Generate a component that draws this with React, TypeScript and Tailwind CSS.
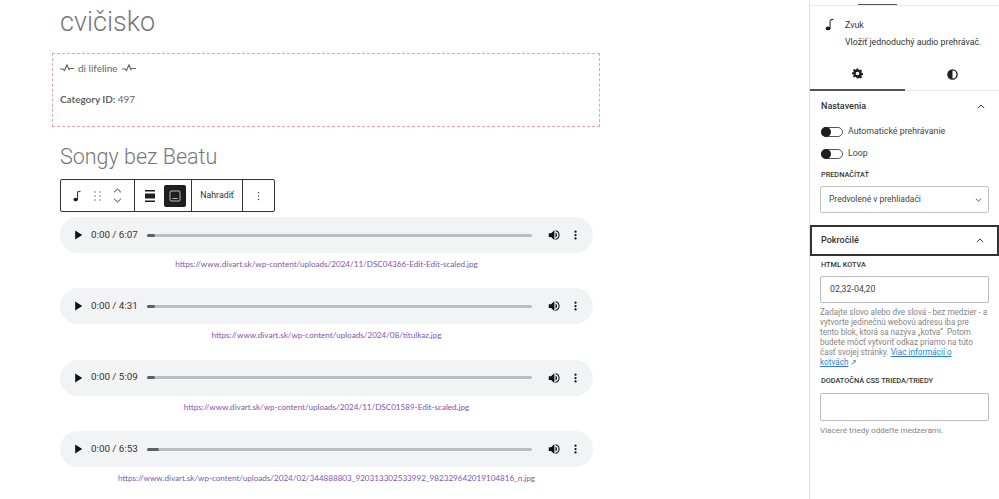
import React from "react";

const Note = ({ c = "" }: { c?: string }) => (
  <svg viewBox="0 0 12 16" className={c} fill="#1e1e1e">
    <ellipse cx="3.6" cy="12.8" rx="3" ry="2.4" />
    <path d="M5.500 12.800V4.200C5.500 2 6.800 1 10 1v1.400C8 2.400 6.700 2.900 6.700 4.400v8.400z" />
  </svg>
);

const Pulse = () => (
  <svg viewBox="0 0 14 8" className="w-[14px] h-[8px]" fill="none" stroke="#666" strokeWidth="1.2">
    <path d="M0 5h3l1.5 1.5L7 1l2 4.5 1-1h4" />
  </svg>
);

const Player = ({ time, progress, url }: { time: string; progress: number; url: string }) => (
  <div className="h-[71.4px] shrink-0">
    <div className="h-[36px] w-[533px] ml-[8px] rounded-[18px] bg-[#f1f3f4] flex items-center pl-[14px] pr-[12px]">
      <svg viewBox="0 0 10 12" className="w-[9px] h-[10px] shrink-0" fill="#111"><path d="M1 0.5v11l8.5-5.5z" /></svg>
      <span className="ml-[8px] w-[50px] shrink-0 text-[9.800px] text-[#333] font-['Roboto',sans-serif] whitespace-nowrap">{time}</span>
      <div className="ml-[6px] w-[385px] h-[3px] rounded bg-[#bdbdbd] shrink-0">
        <div className="h-[3px] rounded bg-[#5f5f5f]" style={{ width: progress }} />
      </div>
      <svg viewBox="0 0 16 16" className="ml-[16px] w-[12px] h-[12px] shrink-0" fill="#111">
        <path d="M1 5.5v5h3l4.5 4V1.500L4 5.500z" />
        <path d="M10 4.500a4 4 0 0 1 0 7zM10 1.500v1.600a5 5 0 0 1 0 9.800v1.600a6.600 6.600 0 0 0 0-13z" />
      </svg>
      <svg viewBox="0 0 4 12" className="ml-[14px] w-[3px] h-[10px] shrink-0" fill="#111">
        <circle cx="2" cy="1.500" r="1.500" /><circle cx="2" cy="6" r="1.500" /><circle cx="2" cy="10.500" r="1.500" />
      </svg>
    </div>
    <div className="w-[533px] ml-[8px] mt-[6px] text-center text-[8.100px] leading-[11px] text-[#7f54b3] font-['Lato',sans-serif] whitespace-nowrap">{url}</div>
  </div>
);

const Sep = () => <div className="w-px self-stretch bg-[#333]" />;

const Chevron = ({ c = "" }: { c?: string }) => (
  <svg viewBox="0 0 10 6" className={c} fill="none" stroke="#1e1e1e" strokeWidth="1.100"><path d="M1 5l4-3.800L9 5" /></svg>
);

const Toggle = ({ label }: { label: string }) => (
  <div className="flex items-center h-[12px]">
    <div className="relative ml-[1px] w-[22px] h-[10px] rounded-full border border-[#555] bg-white">
      <div className="absolute left-[-1px] top-[-1px] w-[10px] h-[10px] rounded-full bg-[#1e1e1e]" />
    </div>
    <span className="ml-[5px] text-[8.800px] text-[#444]">{label}</span>
  </div>
);

export default function App() {
  return (
    <div className="w-[999px] h-[499px] overflow-hidden flex bg-white">
      <main className="w-[809px] shrink-0 pl-[52px]">
        <h1 className="ml-[8px] pt-[4px] h-[40px] text-[27px] leading-[36px] font-light text-[#777] font-['Roboto',sans-serif]">cvičisko</h1>
        <section className="mt-[13px] w-[548px] h-[74px] border border-dashed border-[#f2a0a8] pl-[7px] pt-[8px] text-[#666]">
          <div className="flex items-center gap-[4px] h-[12px] text-[10px] leading-[12px] font-['Lato',sans-serif]">
            <Pulse /><span>di lifeline</span><Pulse />
          </div>
          <div className="mt-[19px] text-[10px] leading-[12px] tracking-[-0.05px] font-['Lato',sans-serif]"><b>Category ID:</b> 497</div>
        </section>
        <h2 className="ml-[8px] mt-[16px] h-[28px] text-[21.500px] leading-[28px] font-light text-[#777] font-['Roboto',sans-serif]">Songy bez Beatu</h2>
        <div className="ml-[8px] mt-[8px] w-[215px] h-[33px] border border-[#333] rounded-[2px] bg-white flex items-center font-['Roboto',sans-serif]">
          <div className="w-[73px] flex items-center pl-[12px]">
            <Note c="w-[9px] h-[12px]" />
            <svg viewBox="0 0 8 10" className="ml-[12px] w-[8px] h-[10px]" fill="#555">
              <circle cx="1" cy="1" r=".7" /><circle cx="6" cy="1" r=".7" /><circle cx="1" cy="5" r=".7" /><circle cx="6" cy="5" r=".7" /><circle cx="1" cy="9" r=".7" /><circle cx="6" cy="9" r=".7" />
            </svg>
            <div className="ml-[11px] flex flex-col gap-[5px]">
              <Chevron c="w-[9px] h-[5px]" />
              <Chevron c="w-[9px] h-[5px] rotate-180" />
            </div>
          </div>
          <Sep />
          <div className="w-[56px] flex items-center pl-[10px]">
            <svg viewBox="0 0 10 12" className="w-[10px] h-[12px]" fill="#1e1e1e"><path d="M0 0h10v1.500H0zM0 3.500h10v5H0zM0 10.500h10V12H0z" /></svg>
            <div className="ml-[9px] w-[22px] h-[22px] rounded-[2px] bg-[#1e1e1e] flex items-center justify-center">
              <svg viewBox="0 0 12 12" className="w-[12px] h-[12px]" fill="none" stroke="#bbb" strokeWidth="1"><rect x="1" y="1" width="10" height="10" rx="1" /><path d="M3.500 8.500h5" /></svg>
            </div>
          </div>
          <Sep />
          <div className="w-[50px] text-center text-[8.800px] text-[#333]">Nahradiť</div>
          <Sep />
          <div className="flex-1 flex justify-center">
            <svg viewBox="0 0 4 12" className="w-[3px] h-[10px]" fill="#444"><circle cx="2" cy="1.500" r="1" /><circle cx="2" cy="6" r="1" /><circle cx="2" cy="10.500" r="1" /></svg>
          </div>
        </div>
        <div className="mt-[5px]">
          <Player time="0:00 / 6:07" progress={8} url="https://www.divart.sk/wp-content/uploads/2024/11/DSC04366-Edit-Edit-scaled.jpg" />
          <Player time="0:00 / 4:31" progress={8} url="https://www.divart.sk/wp-content/uploads/2024/08/titulkaz.jpg" />
          <Player time="0:00 / 5:09" progress={8} url="https://www.divart.sk/wp-content/uploads/2024/11/DSC01589-Edit-scaled.jpg" />
          <Player time="0:00 / 6:53" progress={12} url="https://www.divart.sk/wp-content/uploads/2024/02/344888803_920313302533992_982329642019104816_n.jpg" />
        </div>
      </main>
      <aside className="w-[190px] shrink-0 border-l border-[#e0e0e0] font-['Roboto',sans-serif] text-[#1e1e1e]">
        <div className="h-[6px] border-b border-[#e8e8e8] relative">
          <div className="absolute left-[48px] top-[4px] w-[39px] h-px bg-[#555]" />
        </div>
        <div className="h-[50px] flex pl-[15px] pt-[11px]">
          <Note c="w-[10px] h-[13px] mt-[1px]" />
          <div className="ml-[10px] text-[8.800px] leading-[17px] text-[#333]">
            <div>Zvuk</div>
            <div className="whitespace-nowrap">Vložiť jednoduchý audio prehrávač.</div>
          </div>
        </div>
        <div className="h-[35px] flex border-b border-[#e6e6e6] relative">
          <div className="w-[95px] flex items-center justify-center border-b-[2px] border-[#555] h-[35px]">
            <svg viewBox="0 0 24 24" className="w-[11px] h-[11px] mt-[2px]" fill="#1e1e1e"><path d="M10 1h4l.7 3.200 1.700.7 2.800-1.800 2.800 2.800-1.800 2.800.7 1.700 3.200.7v4l-3.200.7-.7 1.700 1.800 2.800-2.800 2.800-2.800-1.800-1.700.7L14 23h-4l-.7-3.200-1.700-.7-2.800 1.800-2.800-2.800 1.800-2.800-.7-1.700L0 14v-4l3.200-.7.7-1.700-1.800-2.800 2.800-2.800 2.800 1.800 1.700-.7zM12 8a4 4 0 1 0 0 8 4 4 0 0 0 0-8z" fillRule="evenodd" /></svg>
          </div>
          <div className="flex-1 flex items-center justify-center">
            <svg viewBox="0 0 12 12" className="w-[11px] h-[11px] mt-[2px]"><circle cx="6" cy="6" r="5" fill="#fff" stroke="#1e1e1e" strokeWidth="1.500" /><path d="M6 1a5 5 0 0 0 0 10z" fill="#1e1e1e" /></svg>
          </div>
        </div>
        <div className="h-[31px] pl-[11px] pr-[14px] flex items-center justify-between">
          <span className="text-[9px] font-medium text-[#333]">Nastavenia</span>
          <Chevron c="w-[8px] h-[5px]" />
        </div>
        <div className="px-[10px] pt-[4px]">
          <div className="flex flex-col gap-[10px]">
            <Toggle label="Automatické prehrávanie" />
            <Toggle label="Loop" />
          </div>
          <div className="mt-[10px] ml-px text-[7.300px] leading-[10px] font-medium text-[#333]">PREDNAČÍTAŤ</div>
          <div className="mt-[6px] w-[169px] h-[27px] border border-[#c4c4c4] rounded-[2px] flex items-center justify-between pl-[8px] pr-[6px] text-[8.500px] text-[#444]">
            <span>Predvolené v prehliadači</span>
            <svg viewBox="0 0 10 6" className="w-[7px] h-[4px]" fill="none" stroke="#333" strokeWidth="1.200"><path d="M1 1l4 3.800L9 1" /></svg>
          </div>
        </div>
        <div className="mt-[12px] h-[31px] border-[2px] border-[#333] flex items-center justify-between pl-[9px] pr-[13px]">
          <span className="text-[9px] font-medium text-[#333]">Pokročilé</span>
          <Chevron c="w-[8px] h-[5px]" />
        </div>
        <div className="px-[10px] pt-[4px]">
          <div className="ml-px text-[7.300px] leading-[10px] font-medium text-[#333]">HTML KOTVA</div>
          <div className="mt-[6px] w-[169px] h-[27px] border border-[#bbb] rounded-[2px] flex items-center pl-[9px] text-[8.800px] text-[#444]">02,32-04,20</div>
          <p className="mt-[5px] text-[8.150px] leading-[9.900px] text-[#858585] whitespace-nowrap">
            Zadajte slovo alebo dve slová - bez medzier - a<br />
            vytvorte jedinečnú webovú adresu iba pre<br />
            tento blok, ktorá sa nazýva „kotva“. Potom<br />
            budete môcť vytvoriť odkaz priamo na túto<br />
            časť svojej stránky. <span className="text-[#2a7fd8] underline">Viac informácií o</span><br />
            <span className="text-[#2a7fd8] underline">kotvách</span> <span className="text-[#2a7fd8]">↗</span>
          </p>
          <div className="mt-[9px] ml-px text-[7.300px] leading-[10px] font-medium whitespace-nowrap text-[#333]">DODATOČNÁ CSS TRIEDA/TRIEDY</div>
          <div className="mt-[7px] w-[169px] h-[28px] border border-[#bbb] rounded-[2px]" />
          <p className="mt-[4px] text-[8.100px] leading-[10px] text-[#858585]">Viaceré triedy oddeľte medzerami.</p>
        </div>
      </aside>
    </div>
  );
}
